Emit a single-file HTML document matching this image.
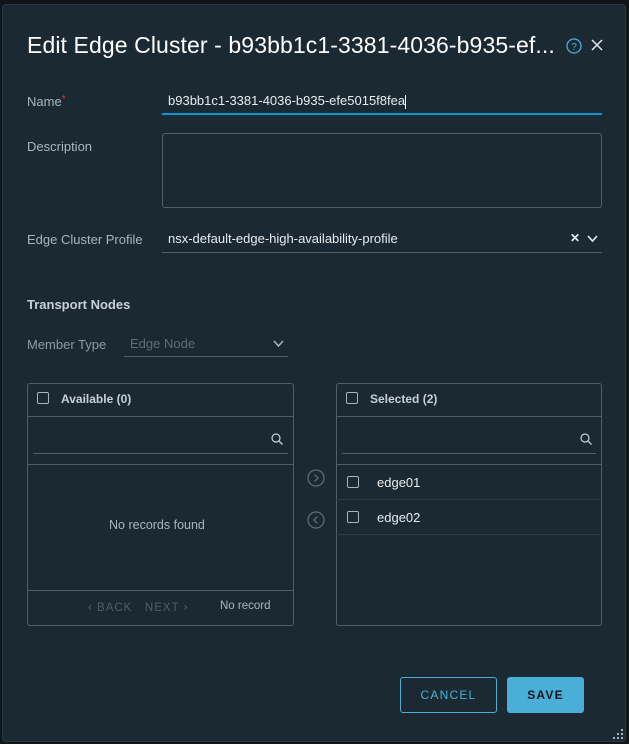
<!DOCTYPE html>
<html><head><style>
*{box-sizing:border-box;margin:0;padding:0}
body{width:629px;height:744px;background:#0f1519;font-family:"Liberation Sans",sans-serif;position:relative;overflow:hidden;color:#c7d0d6}
.dlg{position:absolute;left:2px;top:4px;width:624px;height:738px;background:#1b2a32;border-radius:4px;border:1px solid #2a3a42}
.abs{position:absolute}
.lbl{font-size:13px;color:#a9b5bc}
.box{position:absolute;border:1px solid #4f5f68;border-radius:3px}
.cb{position:absolute;width:12px;height:12px;border:1px solid #a9b5bc;border-radius:2px}
.hline{position:absolute;height:1px;background:#4f5f68}
</style></head><body>
<div class="dlg"></div>
<div class="abs" style="left:27px;top:32px;font-size:23px;color:#ffffff;letter-spacing:0.1px;white-space:nowrap">Edit Edge Cluster - b93bb1c1-3381-4036-b935-ef...</div>
<svg class="abs" style="left:565px;top:37px" width="18" height="18" viewBox="0 0 18 18"><circle cx="9" cy="9" r="7" fill="none" stroke="#49afd9" stroke-width="1.3"/><text x="9" y="13" font-size="10" text-anchor="middle" fill="#49afd9" font-family="Liberation Sans">?</text></svg>
<svg class="abs" style="left:591px;top:39px" width="12" height="12" viewBox="0 0 12 12"><path d="M1 1L11 11M11 1L1 11" stroke="#e0e6ea" stroke-width="1.5"/></svg>

<div class="abs lbl" style="left:27px;top:94px">Name<span style="color:#e33;font-size:10px;vertical-align:top">*</span></div>
<div class="abs" style="left:168px;top:93px;font-size:13px;color:#e6ecef">b93bb1c1-3381-4036-b935-efe5015f8fea<span style="display:inline-block;width:1px;height:14px;background:#fff;vertical-align:middle"></span></div>
<div class="abs" style="left:162px;top:113px;width:440px;height:2px;background:#0f97d4"></div>

<div class="abs lbl" style="left:27px;top:139px">Description</div>
<div class="box" style="left:162px;top:133px;width:440px;height:75px"></div>

<div class="abs lbl" style="left:27px;top:232px">Edge Cluster Profile</div>
<div class="abs" style="left:168px;top:231px;font-size:13px;color:#e6ecef">nsx-default-edge-high-availability-profile</div>
<div class="abs" style="left:570px;top:231px;font-size:12px;color:#e6ecef;font-weight:bold">✕</div>
<svg class="abs" style="left:587px;top:235px" width="11" height="8"><path d="M1 1L5.5 6L10 1" fill="none" stroke="#e6ecef" stroke-width="1.6"/></svg>
<div class="hline" style="left:162px;top:252px;width:440px"></div>

<div class="abs" style="left:27px;top:297px;font-size:13px;font-weight:bold;color:#c7d0d6">Transport Nodes</div>
<div class="abs lbl" style="left:27px;top:337px;color:#8c9aa2">Member Type</div>
<div class="abs" style="left:130px;top:336px;font-size:13px;color:#5d6d76">Edge Node</div>
<svg class="abs" style="left:273px;top:340px" width="11" height="8"><path d="M1 1L5.5 6L10 1" fill="none" stroke="#a9b5bc" stroke-width="1.5"/></svg>
<div class="hline" style="left:124px;top:356px;width:164px"></div>

<!-- left panel -->
<div class="box" style="left:27px;top:383px;width:267px;height:243px"></div>
<div class="cb" style="left:37px;top:392px"></div>
<div class="abs" style="left:61px;top:392px;font-size:12px;font-weight:bold;color:#c7d0d6">Available (0)</div>
<div class="hline" style="left:27px;top:416px;width:267px"></div>
<svg class="abs" style="left:271px;top:433px" width="13" height="13"><circle cx="5" cy="5" r="4" fill="none" stroke="#c7d0d6" stroke-width="1.2"/><path d="M8 8L11.5 11.5" stroke="#c7d0d6" stroke-width="1.3"/></svg>
<div class="hline" style="left:33px;top:453px;width:255px"></div>
<div class="hline" style="left:27px;top:464px;width:267px"></div>
<div class="abs" style="left:109px;top:518px;font-size:12.5px;color:#a9b5bc">No records found</div>
<div class="hline" style="left:27px;top:590px;width:267px"></div>
<div class="abs" style="left:88px;top:602px;font-size:11.5px;color:#4f5f68;letter-spacing:1px">‹ BACK&nbsp;&nbsp; NEXT ›</div>
<div class="abs" style="left:220px;top:600px;font-size:11.5px;color:#a9b5bc">No record</div>

<!-- arrows -->
<svg class="abs" style="left:306px;top:469px" width="20" height="60"><circle cx="10" cy="9" r="8" fill="none" stroke="#5d6d76" stroke-width="1.3"/><path d="M8.5 5.5L12 9L8.5 12.5" fill="none" stroke="#5d6d76" stroke-width="1.3"/><circle cx="10" cy="51" r="8" fill="none" stroke="#5d6d76" stroke-width="1.3"/><path d="M11.5 47.5L8 51L11.5 54.5" fill="none" stroke="#5d6d76" stroke-width="1.3"/></svg>

<!-- right panel -->
<div class="box" style="left:336px;top:383px;width:266px;height:243px"></div>
<div class="cb" style="left:346px;top:392px"></div>
<div class="abs" style="left:370px;top:392px;font-size:12px;font-weight:bold;color:#c7d0d6">Selected (2)</div>
<div class="hline" style="left:336px;top:416px;width:266px"></div>
<svg class="abs" style="left:580px;top:433px" width="13" height="13"><circle cx="5" cy="5" r="4" fill="none" stroke="#c7d0d6" stroke-width="1.2"/><path d="M8 8L11.5 11.5" stroke="#c7d0d6" stroke-width="1.3"/></svg>
<div class="hline" style="left:342px;top:453px;width:254px"></div>
<div class="hline" style="left:336px;top:464px;width:266px"></div>
<div class="cb" style="left:347px;top:476px"></div>
<div class="abs" style="left:377px;top:475px;font-size:13px;color:#e6ecef">edge01</div>
<div class="hline" style="left:336px;top:499px;width:266px;background:#2d3d46"></div>
<div class="cb" style="left:347px;top:511px"></div>
<div class="abs" style="left:377px;top:510px;font-size:13px;color:#e6ecef">edge02</div>
<div class="hline" style="left:336px;top:534px;width:266px;background:#2d3d46"></div>

<!-- buttons -->
<div class="abs" style="left:400px;top:677px;width:97px;height:36px;border:1px solid #49afd9;border-radius:3px;color:#49afd9;font-size:12px;letter-spacing:1.2px;text-align:center;line-height:34px">CANCEL</div>
<div class="abs" style="left:507px;top:677px;width:77px;height:36px;background:#49afd9;border-radius:3px;color:#0f1519;font-size:12px;font-weight:bold;letter-spacing:1.2px;text-align:center;line-height:36px">SAVE</div>
<svg class="abs" style="left:613px;top:729px" width="12" height="12"><g fill="#a9b5bc"><rect x="8" y="0" width="2" height="2"/><rect x="4" y="4" width="2" height="2"/><rect x="8" y="4" width="2" height="2"/><rect x="0" y="8" width="2" height="2"/><rect x="4" y="8" width="2" height="2"/><rect x="8" y="8" width="2" height="2"/></g></svg>
</body></html>
